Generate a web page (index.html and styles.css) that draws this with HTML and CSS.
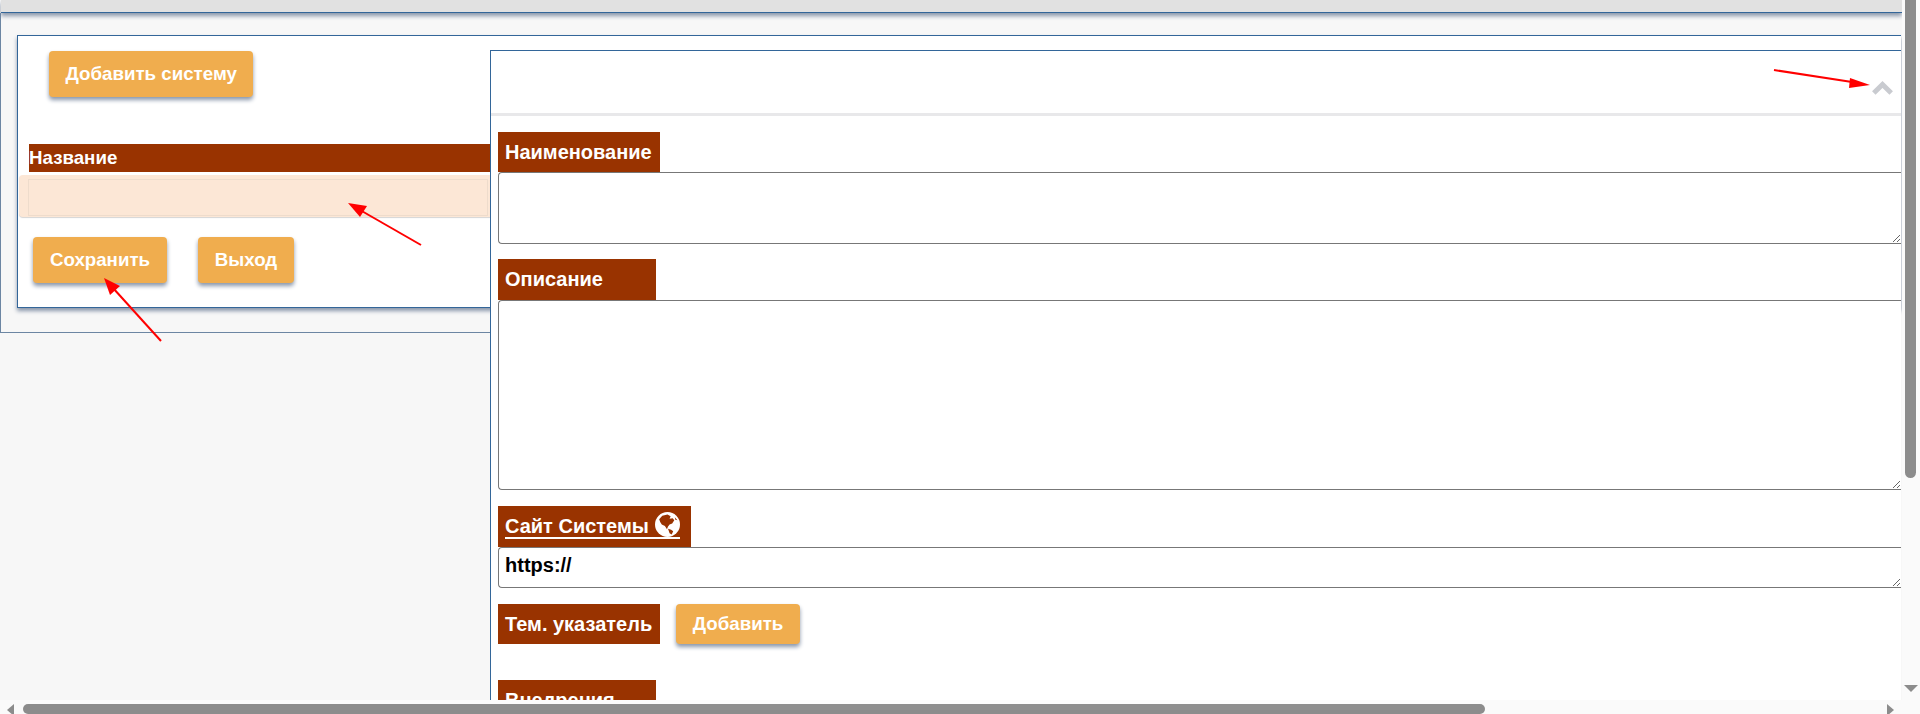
FILE: index.html
```html
<!DOCTYPE html>
<html lang="ru">
<head>
<meta charset="utf-8">
<title>Система</title>
<link rel="stylesheet" href="styles.css">
</head>
<body>
<div class="topbar"></div>
<main class="outer">
  <section class="inner">
    <div class="add-row"><button class="btn">Добавить систему</button></div>
    <div class="table-head">Название</div>
    <div class="table-row"><div class="table-cell"></div></div>
    <div class="actions">
      <button class="btn btn-save">Сохранить</button>
      <button class="btn btn-exit">Выход</button>
    </div>
  </section>
</main>

<aside class="panel">
  <header class="panel-head">
    <svg class="chevron" viewBox="0 0 21 14" width="21" height="14"><path d="M1.800 12 L10.500 3.500 L19.200 12" fill="none" stroke="#c9cbd0" stroke-width="5"/></svg>
  </header>
  <div class="panel-body">
    <div class="label l-name">Наименование</div>
    <textarea class="field f-name"></textarea>
    <div class="label l-desc">Описание</div>
    <textarea class="field f-desc"></textarea>
    <div class="label l-site"><a class="site-link" href="#">Сайт Системы<svg class="globe" viewBox="0 0 24 24" width="25" height="25"><circle cx="12" cy="12" r="12" fill="#fff"/><path d="M4 7 L7 3.500 L12 2.500 L15 4 L14 6.500 L17 6 L18.500 8 L16.500 11 L14 12 L12.500 14 L11.500 16.500 L9.500 13.500 L6.500 12 L5 9.500 Z M12.500 16 L15.500 17 L17.500 18.500 L16 21.500 L14 20.500 Z M19 5 L21.500 8 L19.500 7.500 Z" fill="#993300"/></svg></a></div>
    <textarea class="field f-site">https://</textarea>
    <div class="tem-row">
      <div class="label l-tem">Тем. указатель</div>
      <button class="btn btn-add">Добавить</button>
    </div>
    <div class="label l-impl">Внедрения</div>
  </div>
</aside>

<svg class="arrows" width="1920" height="714" viewBox="0 0 1920 714">
  <g fill="#ff0000" stroke="#ff0000">
    <line x1="421" y1="245" x2="360" y2="210" stroke-width="2"/>
    <polygon points="348,203 367,206 360,217" stroke="none"/>
    <line x1="161" y1="341" x2="113" y2="288" stroke-width="2"/>
    <polygon points="104,278 120,286 110,295" stroke="none"/>
    <line x1="1774" y1="70" x2="1852" y2="82" stroke-width="2"/>
    <polygon points="1870,85 1850,78 1849,88" stroke="none"/>
  </g>
</svg>

<div class="vbar"><div class="vthumb"></div><div class="vdown"></div></div>
<div class="hbar"><div class="hleft"></div><div class="hthumb"></div><div class="hright"></div></div>
</body>
</html>
```
FILE: styles.css
```css
* { box-sizing: border-box; }
html, body { margin: 0; height: 714px; overflow: hidden; }
body {
  background: #f7f7f7;
  font-family: "Liberation Sans", Arial, sans-serif;
  font-size: 18.72px;
  font-weight: bold;
  color: #000;
  position: relative;
}
.topbar {
  width: 1901px;
  height: 13px;
  margin-left: 1px;
  background: #e1e1e1;
  border-bottom: 1px solid #336699;
  box-shadow: 0 3px 4px #8a97ab;
}
.outer {
  width: 1901px;
  height: 320px;
  padding-top: 22px;
  border-left: 1px solid #6c86a3;
  border-bottom: 1px solid #6c86a3;
}
.inner {
  width: 1884px;
  height: 273px;
  margin-left: 16px;
  background: #fff;
  border: 1px solid #336699;
  border-right: 0;
  box-shadow: 0 3px 4px #8a97ab;
}
.btn {
  display: block;
  height: 46px;
  padding: 0 16.5px;
  background: #f0ad4e;
  border: 0;
  border-radius: 4px;
  color: #fff;
  font: bold 18.72px "Liberation Sans", Arial, sans-serif;
  box-shadow: 0 3px 4px #8a97ab;
}
.add-row { padding: 15px 0 0 31px; height: 108px; }
.table-head {
  width: 461px;
  margin-left: 11px;
  height: 28px;
  line-height: 27px;
  background: #993300;
  color: #fff;
}
.table-row {
  width: 472px;
  margin: 3px 0 0 1px;
  height: 42px;
  padding: 4px 3px 1px 9px;
  background: #fce7d6;
  border-radius: 4px 0 0 4px;
  box-shadow: 0 1px 1px #d5d5d5;
}
.table-cell { height: 100%; border: 1px solid #eedccc; }
.actions { display: flex; gap: 31px; margin: 20px 0 0 15px; }
.btn-save { width: 134px; }
.btn-exit { width: 96px; }

.panel {
  position: absolute;
  left: 490px;
  top: 50px;
  width: 1411px;
  height: 650px;
  overflow: hidden;
  background: #fff;
  border-top: 1px solid #336699;
  border-left: 1px solid #336699;
}
.panel-head {
  height: 65px;
  border-bottom: 3px solid #e8e8ea;
  display: flex;
  justify-content: flex-end;
  align-items: flex-end;
  padding: 0 8px 18px 0;
}
.chevron { display: block; }
.panel-body { padding: 16px 0 0 7px; }
.label {
  height: 40px;
  display: flex;
  align-items: center;
  padding-left: 7px;
  background: #993300;
  color: #fff;
  font-size: 20px;
  white-space: nowrap;
}
.l-name, .l-tem { width: 162px; }
.l-desc, .l-impl { width: 158px; }
.l-site { width: 193px; height: 41px; }
.l-desc { height: 41px; margin-top: 15px; }
.l-site { margin-top: 16px; }
.site-link {
  display: flex;
  align-items: flex-end;
  gap: 6px;
  height: 22px;
  line-height: 21px;
  margin-top: 2px;
  color: #fff;
  text-decoration: none;
  border-bottom: 2px solid #fff;
}
.globe { display: block; flex: none; margin-top: -5px; }
.field {
  display: block;
  width: 100%;
  margin: 0;
  padding: 6px;
  background: #fff;
  border: 1px solid #777;
  border-right: 0;
  border-radius: 4px 0 0 4px;
  color: #000;
  font: bold 20px "Liberation Sans", Arial, sans-serif;
  outline: 0;
}
.f-name { height: 72px; }
.f-desc { height: 190px; }
.f-site { height: 41px; }
.tem-row { display: flex; align-items: flex-start; gap: 16px; margin-top: 16px; }
.btn-add { width: 124px; height: 40px; padding: 0; }
.l-impl { margin-top: 36px; }

.arrows { position: absolute; left: 0; top: 0; pointer-events: none; }

.vbar {
  position: absolute;
  left: 1902px;
  top: 0;
  width: 18px;
  height: 700px;
  background: #fafafa;
}
.vthumb {
  position: absolute;
  left: 3px;
  top: 0;
  width: 11px;
  height: 478px;
  background: #8c8c8c;
  border-radius: 0 0 6px 6px;
}
.vdown {
  position: absolute;
  left: 2px;
  top: 685px;
  width: 0;
  height: 0;
  border-left: 7px solid transparent;
  border-right: 7px solid transparent;
  border-top: 7px solid #8c8c8c;
}
.hbar {
  position: absolute;
  left: 0;
  top: 700px;
  width: 1920px;
  height: 14px;
  background: #fafafa;
}
.hthumb {
  position: absolute;
  left: 23px;
  top: 4px;
  width: 1462px;
  height: 10px;
  background: #8c8c8c;
  border-radius: 6px;
}
.hleft, .hright {
  position: absolute;
  top: 4px;
  width: 0;
  height: 0;
  border-top: 6px solid transparent;
  border-bottom: 6px solid transparent;
}
.hleft { left: 7px; border-right: 7px solid #8c8c8c; }
.hright { left: 1887px; border-left: 7px solid #8c8c8c; }
```
